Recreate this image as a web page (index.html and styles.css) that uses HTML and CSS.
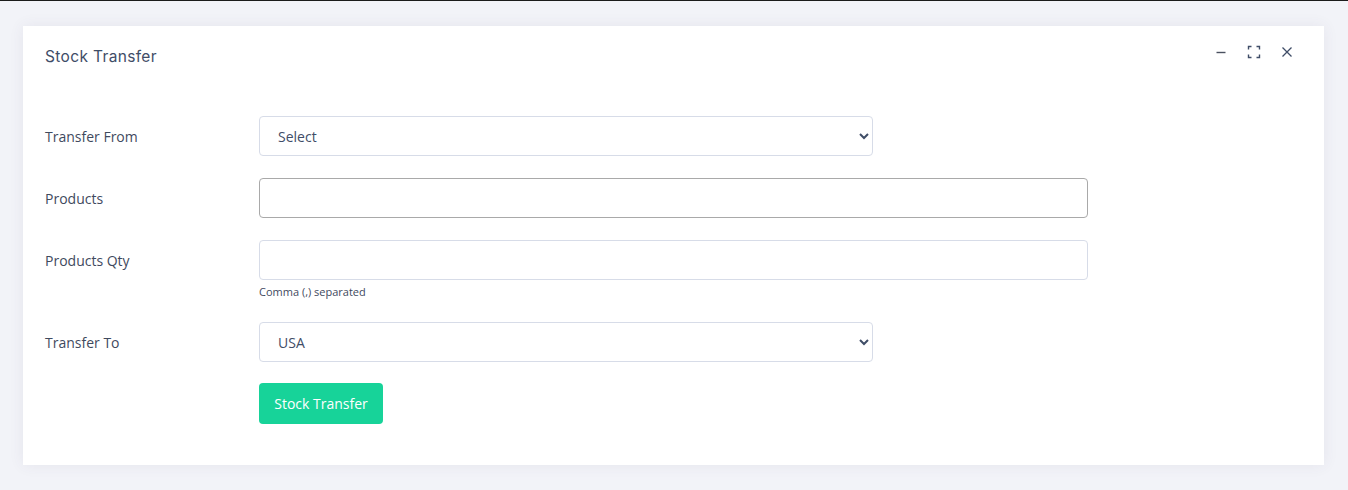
FILE: index.html
```html
<!DOCTYPE html>
<html>
<head>
<meta charset="utf-8">
<link rel="stylesheet" href="styles.css">
</head>
<body>
<div class="topline"></div>
<main class="page">
  <section class="card">
    <header class="card-head">
      <h3 class="card-title">Stock Transfer</h3>
      <div class="tools">
        <button class="tool" aria-label="Minimize">
          <svg width="12" height="12" viewBox="0 0 12 12"><path d="M1.5 6.5h9" stroke="#4a5160" stroke-width="1.4" fill="none"/></svg>
        </button>
        <button class="tool" aria-label="Fullscreen">
          <svg width="14" height="14" viewBox="0 0 14 14" fill="none" stroke="#3f4d67" stroke-width="1.4"><path d="M1.5 4.5v-3h3M9.5 1.5h3v3M12.5 9.5v3h-3M4.5 12.5h-3v-3"/></svg>
        </button>
        <button class="tool" aria-label="Close">
          <svg width="12" height="12" viewBox="0 0 12 12" fill="none" stroke="#3f4d67" stroke-width="1.3"><path d="M1.5 1.5l9 9M10.5 1.5l-9 9"/></svg>
        </button>
      </div>
    </header>
    <form class="card-body">
      <div class="row">
        <label class="lbl">Transfer From</label>
        <div class="ctl">
          <select class="field sel"><option>Select</option></select>
        </div>
      </div>
      <div class="row">
        <label class="lbl">Products</label>
        <div class="ctl">
          <input class="field wide grey" type="text">
        </div>
      </div>
      <div class="row row-help">
        <label class="lbl">Products Qty</label>
        <div class="ctl">
          <input class="field wide" type="text">
          <div class="help">Comma (,) separated</div>
        </div>
      </div>
      <div class="row">
        <label class="lbl">Transfer To</label>
        <div class="ctl">
          <select class="field sel"><option>USA</option></select>
        </div>
      </div>
      <div class="row actions">
        <div class="lbl"></div>
        <div class="ctl">
          <button type="button" class="btn">Stock Transfer</button>
        </div>
      </div>
    </form>
  </section>
</main>
</body>
</html>
```

FILE: styles.css
```css
html, body {
  margin: 0;
  padding: 0;
  height: 490px;
  overflow: hidden;
}
body {
  background: #f2f3f8;
  font-family: "Open Sans", "Noto Sans", sans-serif;
  color: #3f4a5e;
}
.topline {
  height: 1px;
  background: #1b1b1b;
}
.page {
  padding: 25px 24px 0 23px;
}
.card {
  background: #fff;
  width: 1301px;
  height: 439px;
  box-sizing: border-box;
  box-shadow: 0 0 14px 0 rgba(82, 63, 105, 0.08);
}
.card-head {
  height: 60px;
  display: flex;
  align-items: center;
  justify-content: space-between;
  padding: 0 22px;
}
.card-title {
  margin: 0;
  font-family: "Inter", "Noto Sans", sans-serif;
  font-weight: 400;
  font-size: 15.5px;
  color: #3f4d67;
  letter-spacing: 0.35px;
}
.tools {
  display: flex;
  gap: 13px;
  margin-right: 5px;
  margin-top: -9px;
}
.tool {
  width: 20px;
  height: 20px;
  padding: 0;
  border: 0;
  background: none;
  display: flex;
  align-items: center;
  justify-content: center;
}
.card-body {
  padding: 30px 22px 0 22px;
  margin: 0;
}
.row {
  display: flex;
  margin-bottom: 22px;
}
.lbl {
  width: 214px;
  flex: none;
  height: 40px;
  display: flex;
  align-items: center;
  font-size: 14px;
  color: #3f4a5e;
}
.ctl {
  flex: none;
}
.field {
  box-sizing: border-box;
  height: 40px;
  border: 1px solid #d7dce8;
  border-radius: 4px;
  background: #fff;
  font-family: "Open Sans", "Noto Sans", sans-serif;
  font-size: 14px;
  color: #3f4d67;
  display: block;
  outline: none;
}
.sel {
  width: 614px;
  padding: 0 8px 0 14px;
}
.wide {
  width: 829px;
  padding: 0 16px;
}
.grey {
  border-color: #a9a9a9;
}
.help {
  font-size: 11px;
  color: #3f4a5e;
  margin-top: 5px;
  line-height: 14px;
  height: 14px;
}
.row-help {
  margin-bottom: 23px;
}
.actions {
  margin-top: -1px;
}
.actions .lbl {
  height: 41px;
}
.btn {
  height: 41px;
  width: 124px;
  border: 0;
  border-radius: 4px;
  background: #17d399;
  color: #fff;
  font-family: "Open Sans", "Noto Sans", sans-serif;
  font-size: 14px;
  padding: 0;
}
```
